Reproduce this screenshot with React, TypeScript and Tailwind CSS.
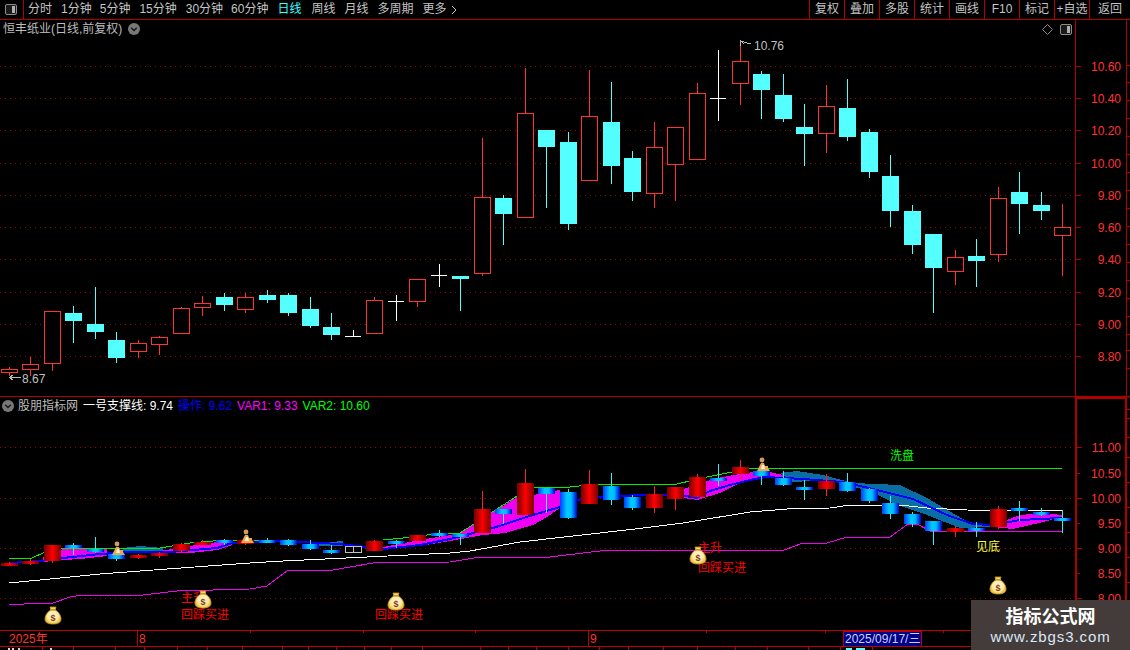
const RED = "#ff3232";
const CYAN = "#54ffff";
const LINE = "#b00000";

const periods = [
  { label: "分时", gap: "mr-[9px]" },
  { label: "1分钟", gap: "mr-[8px]" },
  { label: "5分钟", gap: "mr-[9px]" },
  { label: "15分钟", gap: "mr-[9px]" },
  { label: "30分钟", gap: "mr-[8px]" },
  { label: "60分钟", gap: "mr-[9px]" },
  { label: "日线", gap: "mr-[10px]", active: true },
  { label: "周线", gap: "mr-[9px]" },
  { label: "月线", gap: "mr-[9px]" },
  { label: "多周期", gap: "mr-[9px]" },
  { label: "更多", gap: "mr-[4px]" },
];
const actions = ["复权", "叠加", "多股", "统计", "画线", "F10", "标记", "+自选"];

// kind, body top, body bottom, wick high, wick low (pixels of the price panel)
type Candle = ["r" | "c" | "w", number, number, number, number];
const candles: Candle[] = [
  ["r", 369, 372, 367, 376], ["r", 364, 369, 357, 376], ["r", 311, 363, 311, 371], ["c", 313, 321, 306, 343],
  ["c", 324, 332, 287, 339], ["c", 340, 358, 332, 363], ["r", 343, 351, 340, 358], ["r", 337, 344, 336, 355],
  ["r", 308, 333, 307, 334], ["r", 303, 307, 296, 316], ["c", 297, 305, 293, 311], ["r", 297, 309, 293, 313],
  ["c", 295, 300, 290, 303], ["c", 295, 313, 293, 316], ["c", 309, 326, 297, 328], ["c", 327, 335, 313, 340],
  ["w", 336, 336, 330, 337], ["r", 300, 333, 297, 333], ["w", 301, 301, 295, 321], ["r", 279, 301, 279, 307],
  ["w", 275, 275, 264, 287], ["c", 276, 279, 276, 311], ["r", 197, 273, 138, 276], ["c", 198, 214, 195, 245],
  ["r", 113, 217, 68, 218], ["c", 130, 147, 130, 208], ["c", 142, 224, 132, 230], ["r", 116, 180, 70, 180],
  ["c", 122, 166, 82, 184], ["c", 158, 192, 151, 201], ["r", 147, 193, 122, 208], ["r", 127, 164, 127, 201],
  ["r", 93, 159, 83, 159], ["w", 98, 98, 50, 121], ["r", 61, 83, 40, 105], ["c", 74, 90, 71, 119],
  ["c", 95, 119, 74, 122], ["c", 127, 134, 104, 166], ["r", 106, 133, 85, 153], ["c", 108, 137, 79, 141],
  ["c", 132, 172, 129, 178], ["c", 176, 211, 155, 227], ["c", 211, 245, 205, 254], ["c", 234, 268, 234, 313],
  ["r", 257, 271, 250, 285], ["c", 256, 261, 239, 287], ["r", 198, 254, 187, 262], ["c", 192, 204, 172, 234],
  ["c", 205, 211, 192, 220], ["r", 227, 235, 204, 276],
];
const cx = (i: number) => Math.floor(9.3 + 21.5 * i);
const toLower = (y: number) => 468.5 + (y - 66) * 0.3106;

const priceGrid = [66, 98, 130, 163, 195, 227, 259, 292, 324, 356];
const priceLabels = ["10.60", "10.40", "10.20", "10.00", "9.80", "9.60", "9.40", "9.20", "9.00", "8.80"];
const lowerTicks: [number, string, boolean][] = [
  [447, "11.00", true], [473, "10.50", false], [498, "10.00", true], [523, "9.50", false],
  [548, "9.00", true], [573, "8.50", false], [598, "8.00", true],
];

const whiteLine = "9,583 50,579 100,574 167,569 250,563 283,561 367,557 450,553 470,551 520,542 635,529 683,523 750,512 787,509 830,508 850,505 900,505 927,508 967,510 1062,511";
const magentaLine = "9,605 40,603 53,603 70,597 83,595 143,595 177,591 250,589 267,586 288,570 333,570 373,563 450,562 480,557 550,557 583,553 608,550 784,550 803,543 827,543 847,537 890,537 908,524 917,524 930,531 1062,531";
const greenLine = "9,558 32,558 43,553 63,548 160,548 190,543 213,541 297,540 383,540 403,538 427,535 460,533 517,496 533,487 570,487 597,484 677,484 707,477 732,472 750,468 1062,468";
const blueLine = "9,563 40,561 63,558 100,554 130,552 170,552 217,548 232,543 270,541 300,542 340,544 383,549 420,545 450,539 493,528 533,515 560,507 578,500 600,497 640,495 680,495 697,498 710,491 730,485 750,480 765,477 803,479 843,482 877,490 913,499 947,515 973,524 993,525 1020,520 1060,518";

const magentaBands = [
  "43,557 63,549 80,548 107,548 107,556 80,559 63,560 43,562",
  "160,551 190,546 217,542 232,541 232,545 217,550 190,553 160,553",
  "383,547 420,540 450,535 460,533 517,497 533,495 560,490 560,508 547,517 533,525 505,533 483,535 450,541 420,546 383,550",
  "683,489 717,478 740,474 753,472 770,472 783,475 783,478 753,478 740,483 720,493 697,500 683,498",
  "993,525 1020,515 1043,513 1062,515 1062,517 1043,522 1013,529 993,527",
];
const tealBands = [
  "123,548 140,546 163,548 163,551 123,551",
  "319,543 343,541 343,546 319,546",
  "780,473 797,471 823,475 853,483 900,485 927,498 973,525 990,526 990,527 960,528 927,515 897,505 873,492 827,480 793,482",
];

function DotLine({ y }: { y: number }) {
  return <line x1={0} x2={1075} y1={y + 0.5} y2={y + 0.5} stroke="#a00000" strokeDasharray="1 4" />;
}

function PanelIcon({ className }: { className: string }) {
  return (
    <svg viewBox="0 0 12 11" className={className}>
      <rect x={0.5} y={0.5} width={11} height={10} rx={1.5} fill="#1a1a1a" stroke="#8c8c8c" />
      <rect x={7} y={2} width={3} height={7} fill="#b0b0b0" />
    </svg>
  );
}

function Chevron({ className }: { className: string }) {
  return (
    <svg viewBox="0 0 12 12" className={className}>
      <circle cx={6} cy={6} r={6} fill="#787878" />
      <path d="M3.2 4.8 6 7.6 8.8 4.8" fill="none" stroke="#161616" strokeWidth={1.4} />
    </svg>
  );
}

function TopBar() {
  return (
    <div className="flex h-[20px] shrink-0 border-b border-[#b00000] text-[12px] leading-[19px] text-[#c4c4c4]">
      <div className="flex w-[24px] items-center justify-center border-r border-[#b00000]">
        <PanelIcon className="mr-[1px] h-[11px] w-[12px]" />
      </div>
      <div className="flex pl-[4px]">
        {periods.map((p) => (
          <span key={p.label} className={`${p.gap} ${p.active ? "text-[#36ffff]" : ""}`}>
            {p.label}
          </span>
        ))}
        <svg viewBox="0 0 6 10" className="mt-[5px] h-[10px] w-[6px]">
          <path d="M1 1 5 5 1 9" fill="none" stroke="#c4c4c4" />
        </svg>
      </div>
      <div className="ml-auto flex">
        {actions.map((a) => (
          <span key={a} className="w-[35px] border-l border-[#b00000] text-center">
            {a}
          </span>
        ))}
        <span className="w-[41px] border-l border-[#b00000] text-center">返回</span>
      </div>
    </div>
  );
}

function AxisStrip({ marks }: { marks: number[] }) {
  return (
    <svg width={3} height="100%" className="block shrink-0">
      {marks.map((y) => (
        <line key={y} x1={0} x2={3} y1={y + 0.5} y2={y + 0.5} stroke={LINE} />
      ))}
    </svg>
  );
}

function PricePanel() {
  return (
    <div className="relative flex h-[377px] shrink-0 border-b border-[#b00000]">
      <div className="absolute left-[3px] top-0 flex h-[18px] items-center text-[12px] text-[#bcbcbc]">
        恒丰纸业(日线,前复权)
        <Chevron className="ml-[6px] h-[12px] w-[12px]" />
      </div>
      <div className="absolute left-[1042px] top-[4px] flex items-center gap-[7px]">
        <svg viewBox="0 0 11 11" className="h-[11px] w-[11px]">
          <path d="M5.5 0.5 10.5 5.5 5.5 10.5 0.5 5.5Z" fill="none" stroke="#8c8c8c" />
        </svg>
        <PanelIcon className="h-[11px] w-[12px]" />
      </div>
      <svg viewBox="0 20 1075 376" width={1075} height={376} className="shrink-0" shapeRendering="crispEdges">
        {priceGrid.map((y) => (
          <DotLine key={y} y={y} />
        ))}
        {candles.map(([kind, top, bottom, hi, lo], i) => {
          const x = cx(i);
          const color = kind === "r" ? RED : kind === "c" ? CYAN : "#ffffff";
          return (
            <g key={i}>
              <line x1={x + 0.5} x2={x + 0.5} y1={hi} y2={lo} stroke={color} />
              {kind === "r" && <rect x={x - 7.5} y={top + 0.5} width={16} height={bottom - top} fill="#000" stroke={RED} />}
              {kind === "c" && <rect x={x - 8} y={top} width={17} height={bottom - top} fill={CYAN} />}
              {kind === "w" && <line x1={x - 8} x2={x + 8} y1={top + 0.5} y2={top + 0.5} stroke="#fff" />}
            </g>
          );
        })}
        <path d="M740 41 L751 44 M740 40 L744 44 M740 40 V46" stroke="#b8b8b8" fill="none" />
        <text x={754} y={50} fontSize={12} fill="#c0c0c0">10.76</text>
        <path d="M9 377.5 H21 M9 377.5 L13 375 M9 377.5 L13 380" stroke="#b8b8b8" fill="none" />
        <text x={22} y={383} fontSize={12} fill="#c0c0c0">8.67</text>
      </svg>
      <div className="shrink-0 border-l border-[#b00000]">
        <svg viewBox="1076 20 50 376" width={50} height={376} className="block">
          {priceGrid.map((y, i) => (
            <g key={y}>
              <line x1={1076} x2={1081} y1={y + 0.5} y2={y + 0.5} stroke={LINE} />
              <text x={1121} y={y + 4.5} fontSize={12} textAnchor="end" fill={RED}>{priceLabels[i]}</text>
            </g>
          ))}
        </svg>
      </div>
      <div className="border-l border-[#b00000]">
        <AxisStrip marks={[45, 62, 80, 98, 116, 134, 152, 170, 188, 206, 224, 242, 260, 278, 296, 314, 330, 348]} />
      </div>
    </div>
  );
}

function MoneyBag({ x, y }: { x: number; y: number }) {
  return (
    <g transform={`translate(${x} ${y})`} shapeRendering="auto">
      <path d="M-3 -10 H3 L2 -7 C6 -5 8 -1 8 2 C8 6 4 7 0 7 C-4 7 -8 6 -8 2 C-8 -1 -6 -5 -2 -7Z" fill="url(#bag)" stroke="#c89a20" strokeWidth={0.8} />
      <rect x={-3} y={-8} width={6} height={1.6} fill="#c8941c" />
      <text x={0} y={4} fontSize={9} fontWeight={700} textAnchor="middle" fill="#8a3a12">$</text>
    </g>
  );
}

function Person({ x, y }: { x: number; y: number }) {
  return (
    <g transform={`translate(${x} ${y})`} shapeRendering="auto">
      <circle cx={0} cy={0} r={2.4} fill="#d89a58" />
      <path d="M-1 3 H2 L3 6 H6 V8 L8 11 H-5 Z" fill="#eca850" />
      <path d="M0 5 H2 L3 9 H-1Z" fill="#fff0d8" />
    </g>
  );
}

function LowerCandles() {
  return (
    <>
      {candles.map(([kind, top, bottom, hi, lo], i) => {
        const x = cx(i);
        if (i === 16) {
          return (
            <g key={i}>
              <rect x={x - 7.5} y={546.5} width={16} height={6} fill="#000" stroke="#c0c0c0" />
              <line x1={x + 0.5} x2={x + 0.5} y1={546} y2={553} stroke="#c0c0c0" />
            </g>
          );
        }
        if (i === 49) {
          return (
            <g key={i}>
              <line x1={x + 0.5} x2={x + 0.5} y1={510} y2={533} stroke="#30f0ff" />
              <rect x={x - 8} y={518} width={17} height={3} fill="url(#blueBody)" />
            </g>
          );
        }
        const yTop = toLower(top);
        const height = Math.max(toLower(bottom) - yTop, 3);
        const wick = kind === "r" ? "#ff2020" : "#30f0ff";
        return (
          <g key={i}>
            <line x1={x + 0.5} x2={x + 0.5} y1={toLower(hi)} y2={toLower(lo)} stroke={wick} />
            <rect x={x - 8} y={yTop} width={17} height={height} fill={kind === "r" ? "url(#redBody)" : "url(#blueBody)"} />
          </g>
        );
      })}
    </>
  );
}

function IndicatorPanel() {
  return (
    <div className="relative flex h-[233px] shrink-0">
      <div className="absolute left-[2px] top-0 flex h-[17px] items-center text-[12px] leading-none">
        <Chevron className="mr-[4px] h-[12px] w-[12px]" />
        <span className="mr-[5px] text-[#bcbcbc]">股朋指标网</span>
        <span className="mr-[5px] text-white">一号支撑线: 9.74</span>
        <span className="mr-[5px] text-[#0000ff]">操作: 9.62</span>
        <span className="mr-[5px] text-[#ff00ff]">VAR1: 9.33</span>
        <span className="text-[#00ff00]">VAR2: 10.60</span>
      </div>
      <svg viewBox="0 397 1075 233" width={1075} height={233} className="shrink-0" shapeRendering="crispEdges">
        <defs>
          <linearGradient id="redBody" x1="0" x2="1" y1="0" y2="0">
            <stop offset="0" stopColor="#780000" />
            <stop offset="0.5" stopColor="#ff0000" />
            <stop offset="1" stopColor="#780000" />
          </linearGradient>
          <linearGradient id="blueBody" x1="0" x2="1" y1="0" y2="0">
            <stop offset="0" stopColor="#0040ff" />
            <stop offset="0.4" stopColor="#00c8ff" />
            <stop offset="0.65" stopColor="#00c0ff" />
            <stop offset="1" stopColor="#0000d8" />
          </linearGradient>
          <radialGradient id="bag">
            <stop offset="0" stopColor="#fff8d8" />
            <stop offset="0.7" stopColor="#fbe9a0" />
            <stop offset="1" stopColor="#eec040" />
          </radialGradient>
        </defs>
        {[447, 498, 548, 598].map((y) => (
          <DotLine key={y} y={y} />
        ))}
        {tealBands.map((points) => (
          <polygon key={points} points={points} fill="#0a6ea4" />
        ))}
        {magentaBands.map((points) => (
          <polygon key={points} points={points} fill="#f000f0" />
        ))}
        <polyline points={magentaLine} fill="none" stroke="#f000f0" />
        <polyline points={whiteLine} fill="none" stroke="#ffffff" />
        <polyline points={greenLine} fill="none" stroke="#00f000" />
        <polyline points={blueLine} fill="none" stroke="#0000ff" strokeWidth={2} />
        <LowerCandles />
        <g fontSize={12} fill="#ff0000">
          <text x={181} y={602}>主升</text>
          <text x={181} y={619}>回踩买进</text>
          <text x={375} y={619}>回踩买进</text>
          <text x={698} y={552}>主升</text>
          <text x={698} y={572}>回踩买进</text>
        </g>
        <text x={890} y={460} fontSize={12} fill="#00ff00">洗盘</text>
        <text x={976} y={551} fontSize={12} fill="#ffff40">见底</text>
        {[[53, 617], [203, 601], [396, 603], [698, 557], [998, 587]].map(([x, y]) => (
          <MoneyBag key={x} x={x} y={y} />
        ))}
        {[[117, 544], [246, 532], [762, 460]].map(([x, y]) => (
          <Person key={x} x={x} y={y} />
        ))}
      </svg>
      <div className="shrink-0 border-l-2 border-[#b00000]">
        <svg viewBox="1077 397 48 233" width={48} height={233} className="block">
          {lowerTicks.map(([y, label, major]) => (
            <g key={y}>
              <line x1={1077} x2={major ? 1082 : 1080} y1={y + 0.5} y2={y + 0.5} stroke={LINE} />
              <text x={1121} y={y + 4.5} fontSize={12} textAnchor="end" fill={RED}>{label}</text>
            </g>
          ))}
          <line x1={1077} x2={1125} y1={398} y2={398} stroke={LINE} strokeWidth={2} />
        </svg>
      </div>
      <div className="border-l-2 border-[#b00000]">
        <AxisStrip marks={[12, 21, 40, 60, 85, 110, 135, 160, 185, 210]} />
      </div>
    </div>
  );
}

const topTicks = [250, 363, 475, 706, 825, 943];
const bottomTicks = [42, 73, 115, 144, 177, 207, 242, 282, 308, 336, 364, 391, 422, 480, 508, 536, 568, 599, 628, 663, 697, 735, 767, 808, 840, 872];

function DateBar() {
  return (
    <svg viewBox="0 630 1130 20" width={1130} height={20} className="block shrink-0" shapeRendering="crispEdges">
      <line x1={0} x2={1130} y1={630.5} y2={630.5} stroke="#c00000" />
      <line x1={0} x2={1130} y1={646.5} y2={646.5} stroke="#c00000" />
      {topTicks.map((x) => (
        <line key={x} x1={x + 0.5} x2={x + 0.5} y1={631} y2={633} stroke="#c00000" />
      ))}
      {bottomTicks.map((x) => (
        <line key={x} x1={x + 0.5} x2={x + 0.5} y1={647} y2={650} stroke="#c00000" />
      ))}
      <line x1={137.5} x2={137.5} y1={631} y2={646} stroke="#c00000" />
      <line x1={588.5} x2={588.5} y1={631} y2={646} stroke="#c00000" />
      <g shapeRendering="auto" fontSize={12} fill={RED}>
        <text x={9} y={643}>2025年</text>
        <text x={139} y={643}>8</text>
        <text x={590} y={643}>9</text>
      </g>
      <rect x={843.5} y={631} width={78} height={15} fill="#000088" stroke="#c00000" strokeWidth={1} />
      <text x={845} y={643} fontSize={12} fill="#d0d0f8" shapeRendering="auto">2025/09/17/三</text>
      <rect x={8} y={648} width={2} height={2} fill="#d8d8d8" />
      <rect x={12} y={648} width={2} height={2} fill="#d8d8d8" />
      <rect x={18} y={648} width={2} height={2} fill="#d8d8d8" />
      <rect x={50} y={648} width={2} height={2} fill="#d8d8d8" />
      <rect x={846} y={648} width={6} height={2} fill={CYAN} />
      <rect x={856} y={648} width={9} height={2} fill={CYAN} />
    </svg>
  );
}

export default function App() {
  return (
    <div className="relative flex h-[650px] w-[1130px] flex-col overflow-hidden bg-black font-['Liberation_Sans','Noto_Sans_CJK_SC',sans-serif]">
      <TopBar />
      <PricePanel />
      <IndicatorPanel />
      <DateBar />
      {/* site watermark sits over the corner of the chart */}
      <div className="absolute bottom-0 right-0 flex h-[50px] w-[159px] flex-col items-center bg-[#433c3a]">
        <span className="mt-[6px] text-[18px] font-bold leading-[22px] text-white">指标公式网</span>
        <span className="text-[15px] leading-[18px] tracking-[0.9px] text-[#dce8f6]">www.zbgs3.com</span>
      </div>
    </div>
  );
}
